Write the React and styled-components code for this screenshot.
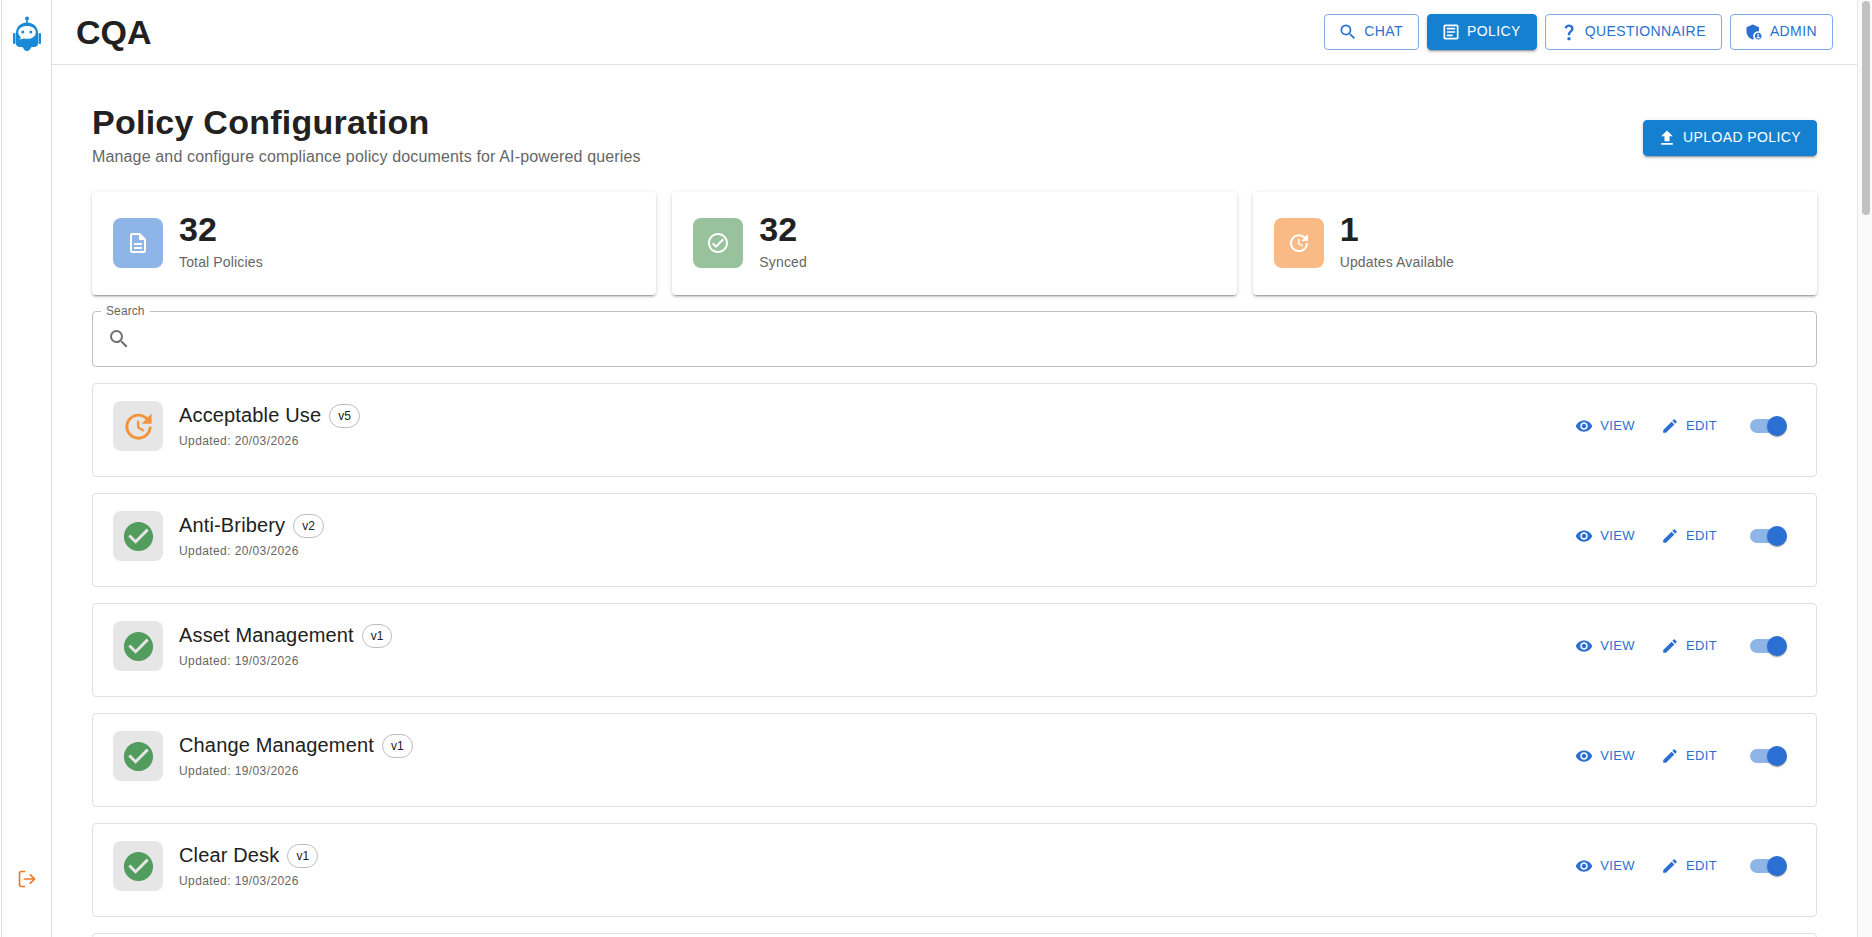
import styled, { createGlobalStyle } from "styled-components";
import {
    MdAdminPanelSettings,
    MdCheckCircle,
    MdEdit,
    MdFileUpload,
    MdOutlineArticle,
    MdOutlineCheckCircle,
    MdOutlineDescription,
    MdQuestionMark,
    MdSearch,
    MdUpdate,
    MdVisibility,
} from "react-icons/md";
import { LogOut } from "lucide-react";

const BLUE = "#2a6fd1";
const SOLID_BLUE = "#1680d0";

const policies = [
    { name: "Acceptable Use", version: "v5", updated: "20/03/2026", outdated: true },
    { name: "Anti-Bribery", version: "v2", updated: "20/03/2026" },
    { name: "Asset Management", version: "v1", updated: "19/03/2026" },
    { name: "Change Management", version: "v1", updated: "19/03/2026" },
    { name: "Clear Desk", version: "v1", updated: "19/03/2026" },
];

const RobotLogo = () => (
    <svg width="30" height="36" viewBox="0 0 30 36">
        <circle cx="15" cy="2.5" r="2" fill="#1a8ad8" />
        <rect x="14.2" y="3" width="1.6" height="4" fill="#1a8ad8" />
        <rect x="1" y="17" width="2.4" height="11" rx="1.1" fill="#1a8ad8" />
        <rect x="26.6" y="17" width="2.4" height="11" rx="1.1" fill="#1a8ad8" />
        <path d="M15 6.500C8 6.500 3.800 11.500 3.800 18v9c0 2.500 1.700 4 4.200 4h2.500l2 3c1.200 1.300 3.800 1.300 5 0l2-3H22c2.500 0 4.200-1.500 4.200-4v-9C26.200 11.500 22 6.500 15 6.500z" fill="#1a8ad8" />
        <path d="M15 10c-5 0-8.800 2.500-8.800 6.300 0 2.300 1.300 4 3 5.100L7 23.500l5-1c1 .2 2 .3 3 .3 5 0 8.800-2.600 8.800-6.400S20 10 15 10z" fill="#fff" />
        <circle cx="10.800" cy="16" r="1.500" fill="#1a8ad8" />
        <circle cx="18.800" cy="16" r="1.500" fill="#1a8ad8" />
    </svg>
);

const App = () => {
    return (
        <>
            <GlobalStyle />
            <PageDiv>
                <SideDiv>
                    <RobotLogo />
                    <LogoutButton>
                        <LogOut size={20} strokeWidth={2} />
                    </LogoutButton>
                </SideDiv>

                <ColumnDiv>
                    <HeaderDiv>
                        <BrandH1>CQA</BrandH1>
                        <NavDiv>
                            <NavButton><MdSearch size={20} /><ButtonLabel>CHAT</ButtonLabel></NavButton>
                            <NavButton $active><MdOutlineArticle size={20} /><ButtonLabel>POLICY</ButtonLabel></NavButton>
                            <NavButton><MdQuestionMark size={20} /><ButtonLabel>QUESTIONNAIRE</ButtonLabel></NavButton>
                            <NavButton><MdAdminPanelSettings size={20} /><ButtonLabel>ADMIN</ButtonLabel></NavButton>
                        </NavDiv>
                    </HeaderDiv>

                    <ContentDiv>
                        <TitleRowDiv>
                            <div>
                                <TitleH2>Policy Configuration</TitleH2>
                                <SubtitleP>Manage and configure compliance policy documents for AI-powered queries</SubtitleP>
                            </div>
                            <NavButton $active><MdFileUpload size={20} /><ButtonLabel>UPLOAD POLICY</ButtonLabel></NavButton>
                        </TitleRowDiv>

                        <StatsDiv>
                            <StatCard>
                                <StatIcon $bg="#8eb5e8"><MdOutlineDescription size={24} /></StatIcon>
                                <StatTextDiv>
                                    <StatNumber>32</StatNumber>
                                    <StatLabel>Total Policies</StatLabel>
                                </StatTextDiv>
                            </StatCard>
                            <StatCard>
                                <StatIcon $bg="#98c29b"><MdOutlineCheckCircle size={24} /></StatIcon>
                                <StatTextDiv>
                                    <StatNumber>32</StatNumber>
                                    <StatLabel>Synced</StatLabel>
                                </StatTextDiv>
                            </StatCard>
                            <StatCard>
                                <StatIcon $bg="#f9ba85"><MdUpdate size={24} /></StatIcon>
                                <StatTextDiv>
                                    <StatNumber>1</StatNumber>
                                    <StatLabel>Updates Available</StatLabel>
                                </StatTextDiv>
                            </StatCard>
                        </StatsDiv>

                        <SearchFieldset>
                            <SearchLegend>Search</SearchLegend>
                            <MdSearch size={24} color="#6f6f6f" />
                        </SearchFieldset>

                        <ListDiv>
                            {policies.map((policy) => (
                                <PolicyCard key={policy.name}>
                                    <StatusBox $outdated={policy.outdated}>
                                        {policy.outdated ? <MdUpdate size={35} /> : <MdCheckCircle size={35} />}
                                    </StatusBox>
                                    <PolicyInfoDiv>
                                        <PolicyNameRow>
                                            <PolicyName>{policy.name}</PolicyName>
                                            <VersionChip>{policy.version}</VersionChip>
                                        </PolicyNameRow>
                                        <UpdatedText>Updated: {policy.updated}</UpdatedText>
                                    </PolicyInfoDiv>
                                    <ActionsDiv>
                                        <ActionButton><MdVisibility size={18} /><ButtonLabel>VIEW</ButtonLabel></ActionButton>
                                        <ActionButton><MdEdit size={18} /><ButtonLabel>EDIT</ButtonLabel></ActionButton>
                                        <SwitchDiv>
                                            <SwitchTrack />
                                            <SwitchThumb />
                                        </SwitchDiv>
                                    </ActionsDiv>
                                </PolicyCard>
                            ))}
                            <PolicyCard />
                        </ListDiv>
                    </ContentDiv>
                </ColumnDiv>

                <ScrollTrack>
                    <ScrollThumb />
                </ScrollTrack>
            </PageDiv>
        </>
    );
};

export default App;

const GlobalStyle = createGlobalStyle`
    * {
        box-sizing: border-box;
    }
    html, body {
        margin: 0;
        height: 100%;
        overflow: hidden;
        background: #fff;
        color: #212121;
        font-family: "Liberation Sans", Arial, sans-serif;
    }
`;

const PageDiv = styled.div`
    display: flex;
    height: 937px;
    overflow: hidden;
    padding-left: 1px;
`;

const SideDiv = styled.div`
    width: 51px;
    flex-shrink: 0;
    display: flex;
    flex-direction: column;
    align-items: center;
    padding-top: 16px;
    border-left: 1px solid #dcdcdc;
    border-right: 1px solid #dcdcdc;
`;

const LogoutButton = styled.div`
    margin-top: 817px;
    height: 20px;
    color: #f07a24;
`;

const ColumnDiv = styled.div`
    flex: 1;
    min-width: 0;
    display: flex;
    flex-direction: column;
`;

const HeaderDiv = styled.div`
    height: 65px;
    flex-shrink: 0;
    display: flex;
    align-items: center;
    justify-content: space-between;
    padding: 0 24px;
    border-bottom: 1px solid #e0e0e0;
`;

const BrandH1 = styled.h1`
    margin: 0;
    font-size: 34px;
    font-weight: 700;
`;

const NavDiv = styled.div`
    display: flex;
    gap: 8px;
`;

const NavButton = styled.button`
    height: 36px;
    display: inline-flex;
    align-items: center;
    gap: 6px;
    padding: 0 15px 0 13px;
    border-radius: 4px;
    border: 1px solid ${(p) => (p.$active ? SOLID_BLUE : "#7fabe8")};
    background: ${(p) => (p.$active ? SOLID_BLUE : "#fff")};
    color: ${(p) => (p.$active ? "#fff" : BLUE)};
    box-shadow: ${(p) => (p.$active ? "0 3px 1px -2px rgba(0,0,0,.2), 0 2px 2px rgba(0,0,0,.14), 0 1px 5px rgba(0,0,0,.12)" : "none")};
    font-family: "Liberation Sans", Arial, sans-serif;
    font-size: 14px;
    font-weight: 400;
    letter-spacing: 0.4px;
`;

const ButtonLabel = styled.span`
    padding-bottom: 2px;
`;

const ContentDiv = styled.div`
    flex: 1;
    min-height: 0;
    padding: 36px 40px 0;
`;

const TitleRowDiv = styled.div`
    display: flex;
    align-items: flex-start;
    justify-content: space-between;
    height: 91px;

    & > button {
        margin-top: 19px;
    }
`;

const TitleH2 = styled.h2`
    margin: 0;
    font-size: 34px;
    font-weight: 700;
    line-height: 42px;
    letter-spacing: 0.25px;
`;

const SubtitleP = styled.p`
    margin: 2px 0 0;
    font-size: 16px;
    line-height: 24px;
    letter-spacing: 0.15px;
    color: #666;
`;

const StatsDiv = styled.div`
    display: grid;
    grid-template-columns: repeat(3, 1fr);
    gap: 16px;
`;

const StatCard = styled.div`
    height: 103px;
    display: flex;
    align-items: center;
    gap: 16px;
    padding: 0 21px 1px;
    border-radius: 4px;
    background: #fff;
    box-shadow: 0 3px 1px -2px rgba(0, 0, 0, 0.2), 0 2px 2px rgba(0, 0, 0, 0.14), 0 1px 5px rgba(0, 0, 0, 0.12);
`;

const StatIcon = styled.div`
    width: 50px;
    height: 50px;
    display: flex;
    align-items: center;
    justify-content: center;
    border-radius: 8px;
    background: ${(p) => p.$bg};
    color: #fff;
`;

const StatTextDiv = styled.div`
    padding-bottom: 6px;
`;

const StatNumber = styled.div`
    font-size: 34px;
    font-weight: 700;
    line-height: 40px;
`;

const StatLabel = styled.div`
    margin-top: 3px;
    font-size: 14px;
    line-height: 20px;
    letter-spacing: 0.15px;
    color: #666;
`;

const SearchFieldset = styled.div`
    position: relative;
    height: 56px;
    margin-top: 16px;
    display: flex;
    align-items: center;
    padding-left: 14px;
    border: 1px solid #c0c0c0;
    border-radius: 4px;
`;

const SearchLegend = styled.span`
    position: absolute;
    left: 8px;
    top: -8px;
    padding: 0 5px;
    background: #fff;
    font-size: 12px;
    line-height: 14px;
    letter-spacing: 0.1px;
    color: #666;
`;

const ListDiv = styled.div`
    display: flex;
    flex-direction: column;
    gap: 16px;
    margin-top: 16px;
`;

const PolicyCard = styled.div`
    height: 94px;
    flex-shrink: 0;
    display: flex;
    align-items: center;
    gap: 16px;
    padding: 0 20px 8px;
    border: 1px solid #e0e0e0;
    border-radius: 4px;
`;

const StatusBox = styled.div`
    width: 50px;
    height: 50px;
    display: flex;
    align-items: center;
    justify-content: center;
    border-radius: 8px;
    background: #e6e6e6;
    color: ${(p) => (p.$outdated ? "#f39237" : "#529c5e")};
`;

const PolicyInfoDiv = styled.div`
    flex: 1;
    padding-bottom: 3px;
`;

const PolicyNameRow = styled.div`
    display: flex;
    align-items: center;
    gap: 8px;
`;

const PolicyName = styled.span`
    font-size: 20px;
    line-height: 32px;
    letter-spacing: 0.15px;
`;

const VersionChip = styled.span`
    height: 24px;
    display: inline-flex;
    align-items: center;
    margin-top: 2px;
    padding: 0 8px;
    border: 1px solid #bdbdbd;
    border-radius: 12px;
    font-size: 12px;
`;

const UpdatedText = styled.div`
    font-size: 12px;
    line-height: 20px;
    letter-spacing: 0.4px;
    color: #666;
`;

const ActionsDiv = styled.div`
    display: flex;
    align-items: center;
    gap: 16px;
`;

const ActionButton = styled.button`
    height: 30px;
    display: inline-flex;
    align-items: center;
    gap: 7px;
    padding: 0 5px;
    border: none;
    background: none;
    color: ${BLUE};
    font-family: "Liberation Sans", Arial, sans-serif;
    font-size: 13px;
    letter-spacing: 0.37px;
`;

const SwitchDiv = styled.div`
    position: relative;
    width: 58px;
    height: 38px;
`;

const SwitchTrack = styled.div`
    position: absolute;
    left: 12px;
    top: 12px;
    width: 34px;
    height: 14px;
    border-radius: 7px;
    background: #8eb5e8;
`;

const SwitchThumb = styled.div`
    position: absolute;
    left: 29px;
    top: 9px;
    width: 20px;
    height: 20px;
    border-radius: 50%;
    background: ${BLUE};
    box-shadow: 0 2px 1px -1px rgba(0, 0, 0, 0.2), 0 1px 1px rgba(0, 0, 0, 0.14), 0 1px 3px rgba(0, 0, 0, 0.12);
`;

const ScrollTrack = styled.div`
    width: 15px;
    flex-shrink: 0;
    padding: 1px 3px 0 4px;
    background: #fafafa;
    border-left: 1px solid #e8e8e8;
`;

const ScrollThumb = styled.div`
    width: 8px;
    height: 214px;
    border-radius: 4px;
    background: #c1c1c1;
`;
